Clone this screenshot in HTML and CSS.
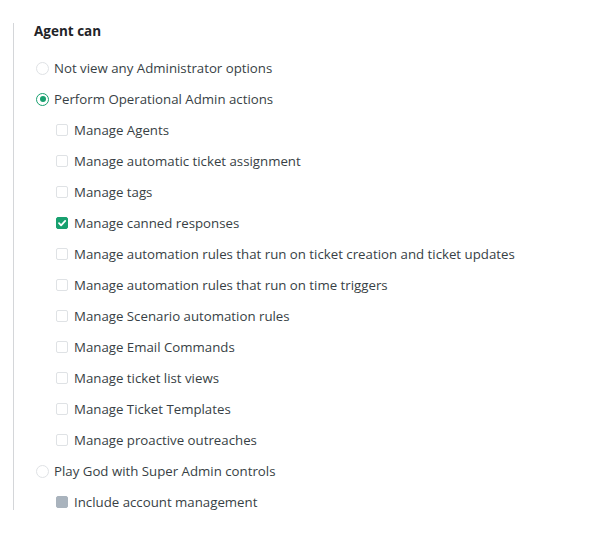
FILE: index.html
```html
<!DOCTYPE html>
<html>
<head>
<meta charset="utf-8">
<link rel="stylesheet" href="styles.css">
</head>
<body>
<div class="panel">
  <div class="title">Agent can</div>
  <div class="options">
    <div class="row radio-row"><span class="radio"></span><span class="label">Not view any Administrator options</span></div>
    <div class="row radio-row"><span class="radio checked"></span><span class="label">Perform Operational Admin actions</span></div>
    <div class="row check-row"><span class="check"></span><span class="label">Manage Agents</span></div>
    <div class="row check-row"><span class="check"></span><span class="label">Manage automatic ticket assignment</span></div>
    <div class="row check-row"><span class="check"></span><span class="label">Manage tags</span></div>
    <div class="row check-row"><span class="check checked"><svg viewBox="0 0 12 12" width="12" height="12"><path d="M3 6.2 L5.1 8.3 L9.2 3.9" fill="none" stroke="#fff" stroke-width="1.8" stroke-linecap="round" stroke-linejoin="round"/></svg></span><span class="label">Manage canned responses</span></div>
    <div class="row check-row"><span class="check"></span><span class="label">Manage automation rules that run on ticket creation and ticket updates</span></div>
    <div class="row check-row"><span class="check"></span><span class="label">Manage automation rules that run on time triggers</span></div>
    <div class="row check-row"><span class="check"></span><span class="label">Manage Scenario automation rules</span></div>
    <div class="row check-row"><span class="check"></span><span class="label">Manage Email Commands</span></div>
    <div class="row check-row"><span class="check"></span><span class="label">Manage ticket list views</span></div>
    <div class="row check-row"><span class="check"></span><span class="label">Manage Ticket Templates</span></div>
    <div class="row check-row"><span class="check"></span><span class="label">Manage proactive outreaches</span></div>
    <div class="row radio-row"><span class="radio"></span><span class="label">Play God with Super Admin controls</span></div>
    <div class="row check-row"><span class="check disabled"></span><span class="label">Include account management</span></div>
  </div>
</div>
</body>
</html>
```
FILE: styles.css
```css
html, body {
  margin: 0;
  padding: 0;
  background: #fff;
}
body {
  font-family: "Open Sans", "Noto Sans", sans-serif;
  color: #383f45;
  font-size: 13.25px;
}
.panel {
  margin: 23px 0 0 13px;
  border-left: 1px solid #d4d6d9;
  padding: 0 0 0 20px;
  width: 560px;
}
.title {
  font-weight: 700;
  font-size: 13.5px;
  color: #1f2428;
  height: 16px;
  line-height: 16px;
}
.options {
  padding-top: 21px;
  display: flex;
  flex-direction: column;
  gap: 15px;
}
.row {
  display: flex;
  align-items: center;
  height: 16px;
}
.radio-row {
  padding-left: 2px;
}
.check-row {
  padding-left: 22px;
}
.radio {
  width: 13px;
  height: 13px;
  border: 1px solid #dfe2e5;
  border-radius: 50%;
  box-sizing: border-box;
  margin-right: 5px;
  flex: none;
  position: relative;
}
.radio.checked {
  border: 1.5px solid #18a06f;
}
.radio.checked::after {
  content: "";
  position: absolute;
  left: 50%;
  top: 50%;
  width: 6px;
  height: 6px;
  margin: -3px 0 0 -3px;
  border-radius: 50%;
  background: #18a06f;
}
.check {
  width: 12px;
  height: 12px;
  border: 1px solid #dfe2e5;
  border-radius: 2px;
  box-sizing: border-box;
  margin-right: 6px;
  flex: none;
  display: flex;
}
.check.checked {
  background: #18a06f;
  border-color: #18a06f;
}
.check.checked svg {
  margin: -1px;
}
.check.disabled {
  background: #a9b3bd;
  border-color: #a9b3bd;
}
.label {
  white-space: nowrap;
  line-height: 16px;
}
```
